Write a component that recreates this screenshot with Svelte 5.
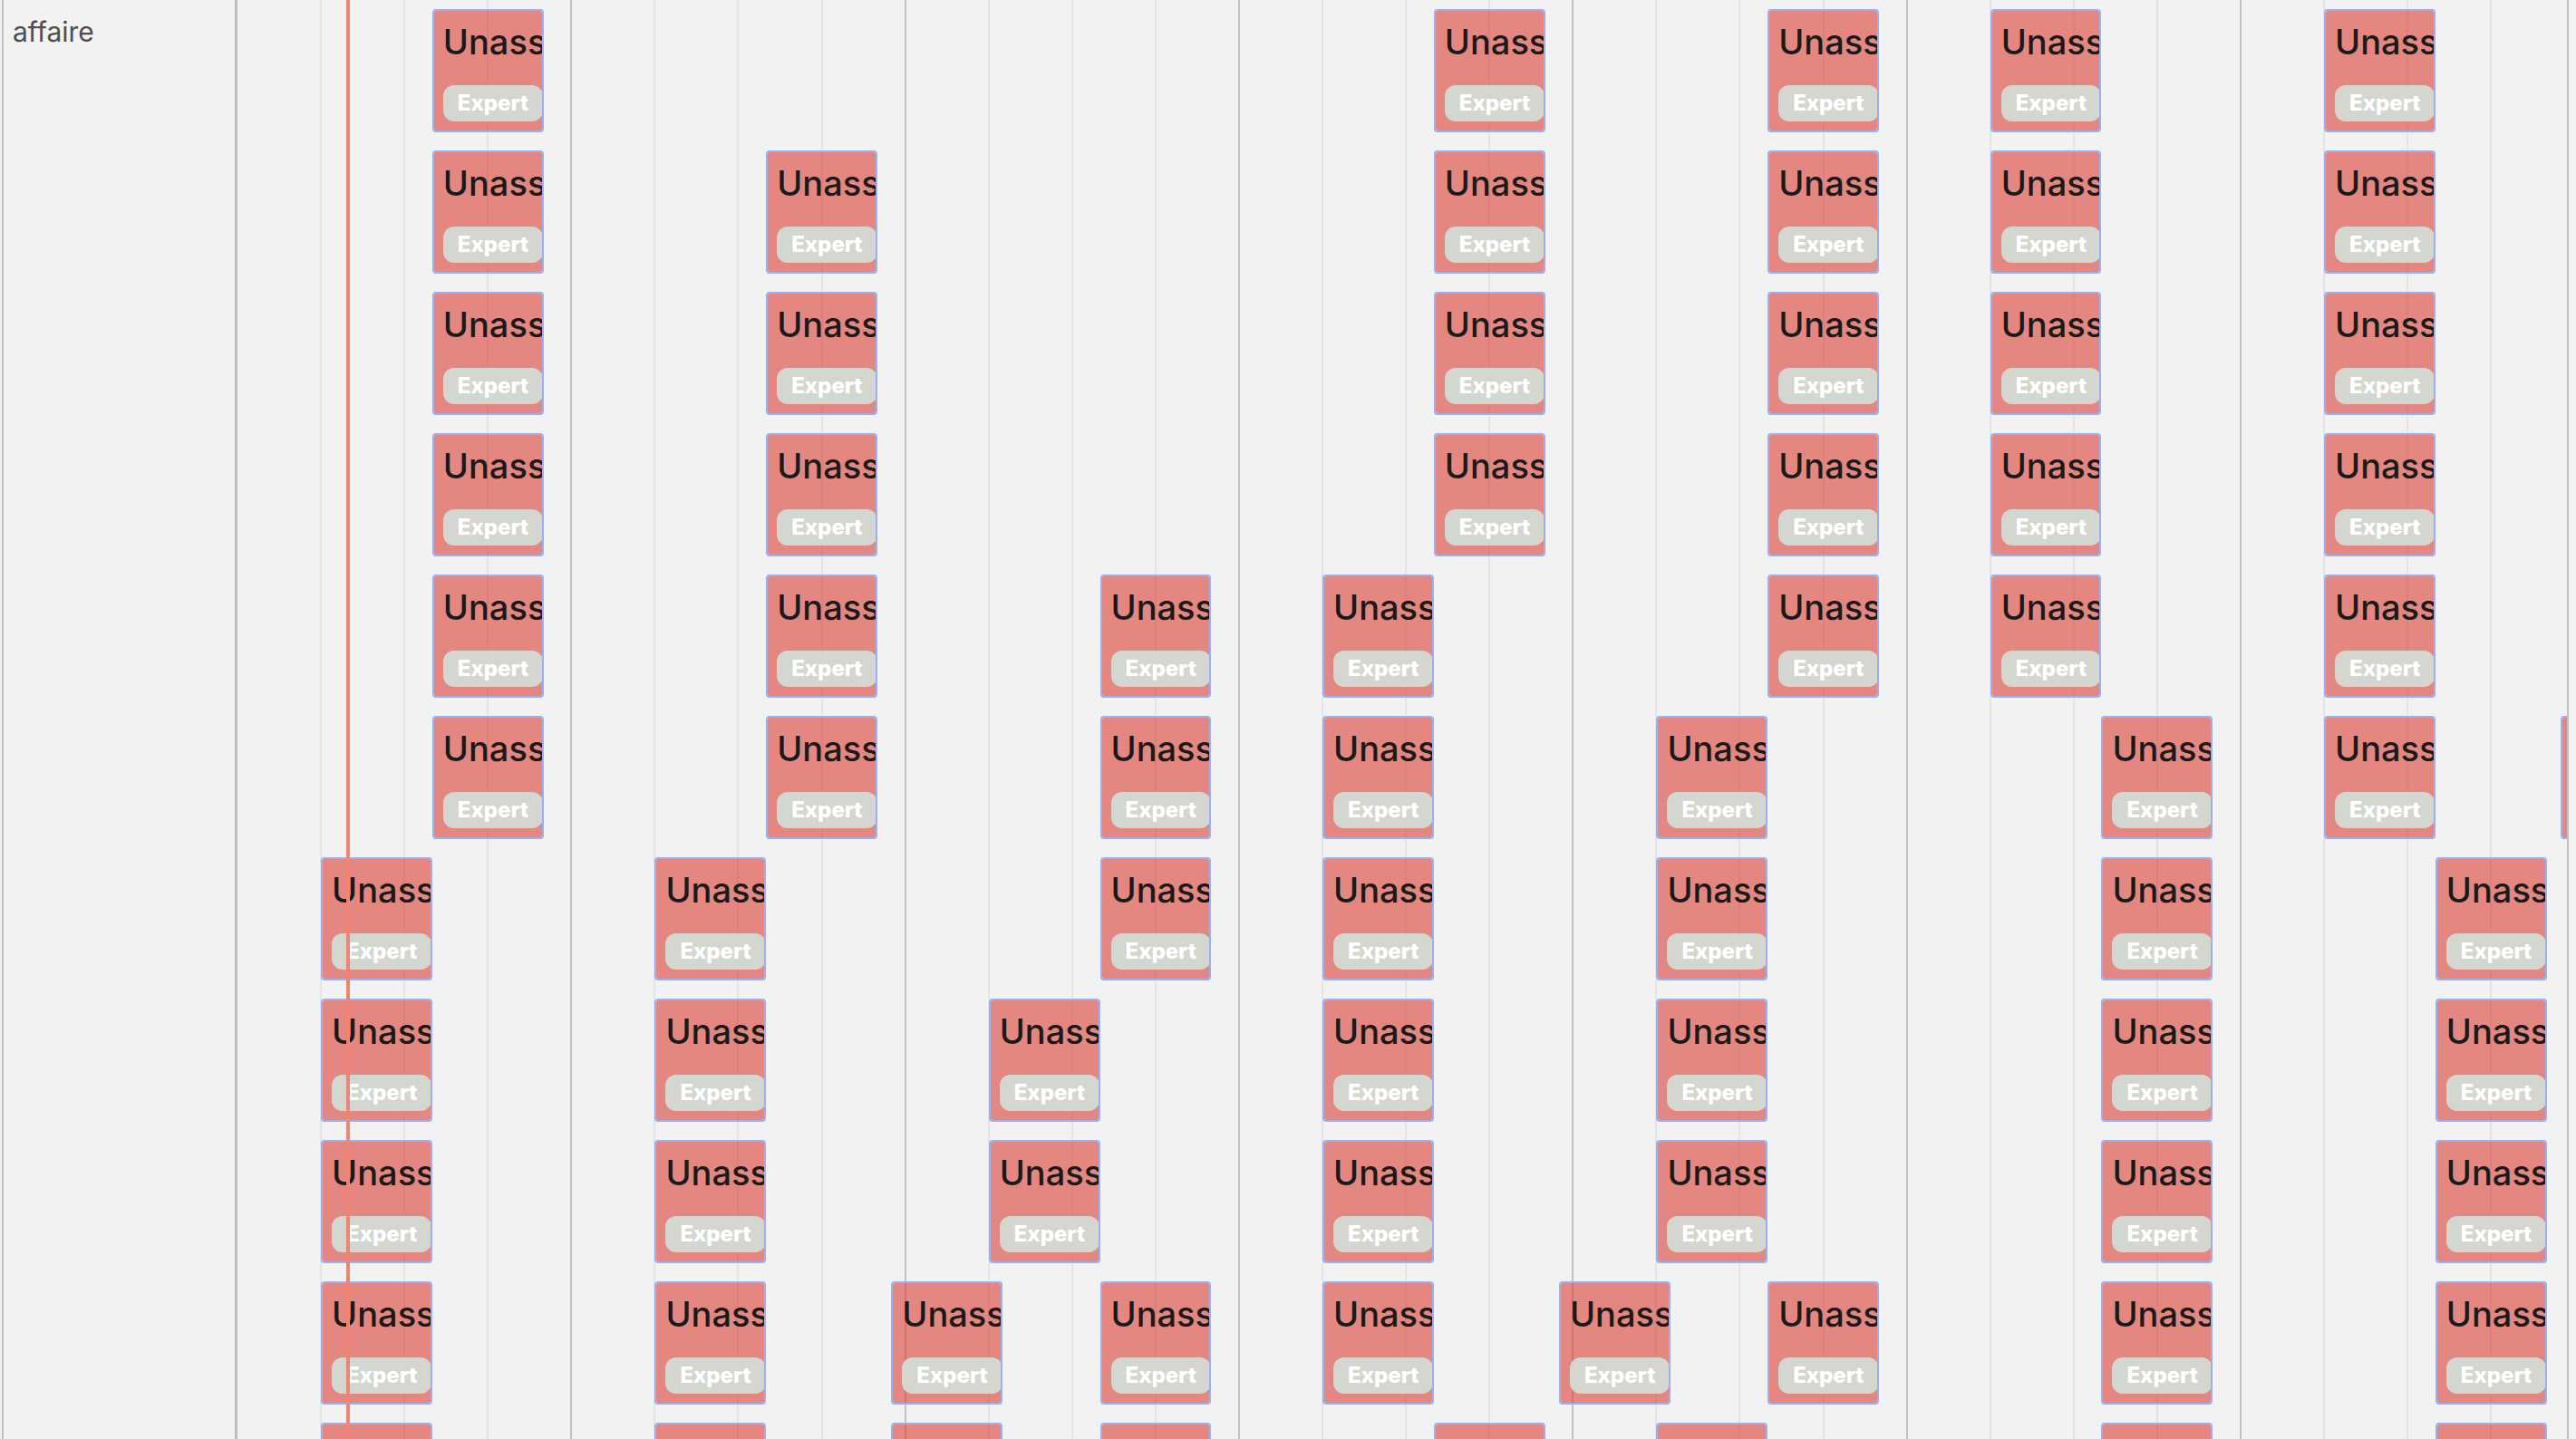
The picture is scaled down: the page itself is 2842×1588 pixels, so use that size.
<script>
  // Each row lists the start of its shifts, counted in half-ticks of the time scale.
  const rows = [
    [14, 86, 110, 126, 150],
    [14, 38, 86, 110, 126, 150],
    [14, 38, 86, 110, 126, 150],
    [14, 38, 86, 110, 126, 150],
    [14, 38, 62, 78, 110, 126, 150],
    [14, 38, 62, 78, 102, 134, 150, 167],
    [6, 30, 62, 78, 102, 134, 158],
    [6, 30, 54, 78, 102, 134, 158],
    [6, 30, 54, 78, 102, 134, 158],
    [6, 30, 47, 62, 78, 95, 110, 134, 158],
    [6, 30, 47, 62, 86, 102, 134, 158]
  ];

  const shifts = rows.flatMap((starts, row) => starts.map((start) => ({ row, start })));
  const lanes = Array.from({ length: 27 }, (_, i) => i + 1);
</script>

<main class="timeline">
  <header class="resource">affaire</header>
  <section class="viewport">
    <div class="board">
      {#each lanes as lane}
        <div class="lane" class:major={lane % 4 === 0} style="grid-column: {lane * 6 + 1} / span 6"></div>
      {/each}
      {#each shifts as shift}
        <article class="shift" style="grid-column: {shift.start + 1} / span 8; grid-row: {shift.row + 1}">
          <div class="title">Unass</div>
          <span class="badge">Expert</span>
        </article>
      {/each}
    </div>
    <div class="now"></div>
  </section>
</main>

<style>
  :global(body) {
    background: #f2f2f2;
  }

  .timeline {
    box-sizing: border-box;
    display: grid;
    grid-template-columns: 260px minmax(0, 1fr);
    height: 100vh;
    padding: 0 8px 0 2px;
    overflow: hidden;
    font-family: Inter, "Liberation Sans", sans-serif;
  }

  .resource {
    padding: 15px 10px;
    border-left: 2px solid #bfbfbf;
    border-right: 3px solid #bfbfbf;
    color: #4d4d4d;
    font-size: 30px;
    line-height: 40px;
  }

  .viewport {
    position: relative;
    overflow: hidden;
    border-right: 2px solid #bfbfbf;
  }

  .board {
    display: grid;
    grid-template-columns: repeat(176, minmax(0, 1fr));
    grid-template-rows: repeat(11, 156px);
    width: calc(100% * 8800 / 8373);
  }

  .lane {
    grid-row: 1 / -1;
    margin-left: -1px;
    border-left: 2px solid #e4e4e4;
  }

  .lane.major {
    border-left-color: #c2c2c2;
  }

  .shift {
    box-sizing: border-box;
    margin: 10px 0;
    padding: 10px;
    overflow: hidden;
    border: 2px solid #9bb0f3;
    border-radius: 4px;
    background: rgba(218, 55, 43, 0.57);
    background-clip: padding-box;
    white-space: nowrap;
  }

  .title {
    height: 72px;
    color: #1a1a1a;
    font-size: 38px;
    font-weight: 500;
    line-height: 48px;
  }

  .badge {
    display: block;
    width: max-content;
    padding: 0 16px;
    border-radius: 12px;
    background: #d4d7cf;
    color: #fff;
    font-size: 24px;
    font-weight: 800;
    line-height: 40px;
  }

  .now {
    position: absolute;
    top: 0;
    bottom: 0;
    left: 4.67%;
    width: 4px;
    background: #ef8572;
  }
</style>
